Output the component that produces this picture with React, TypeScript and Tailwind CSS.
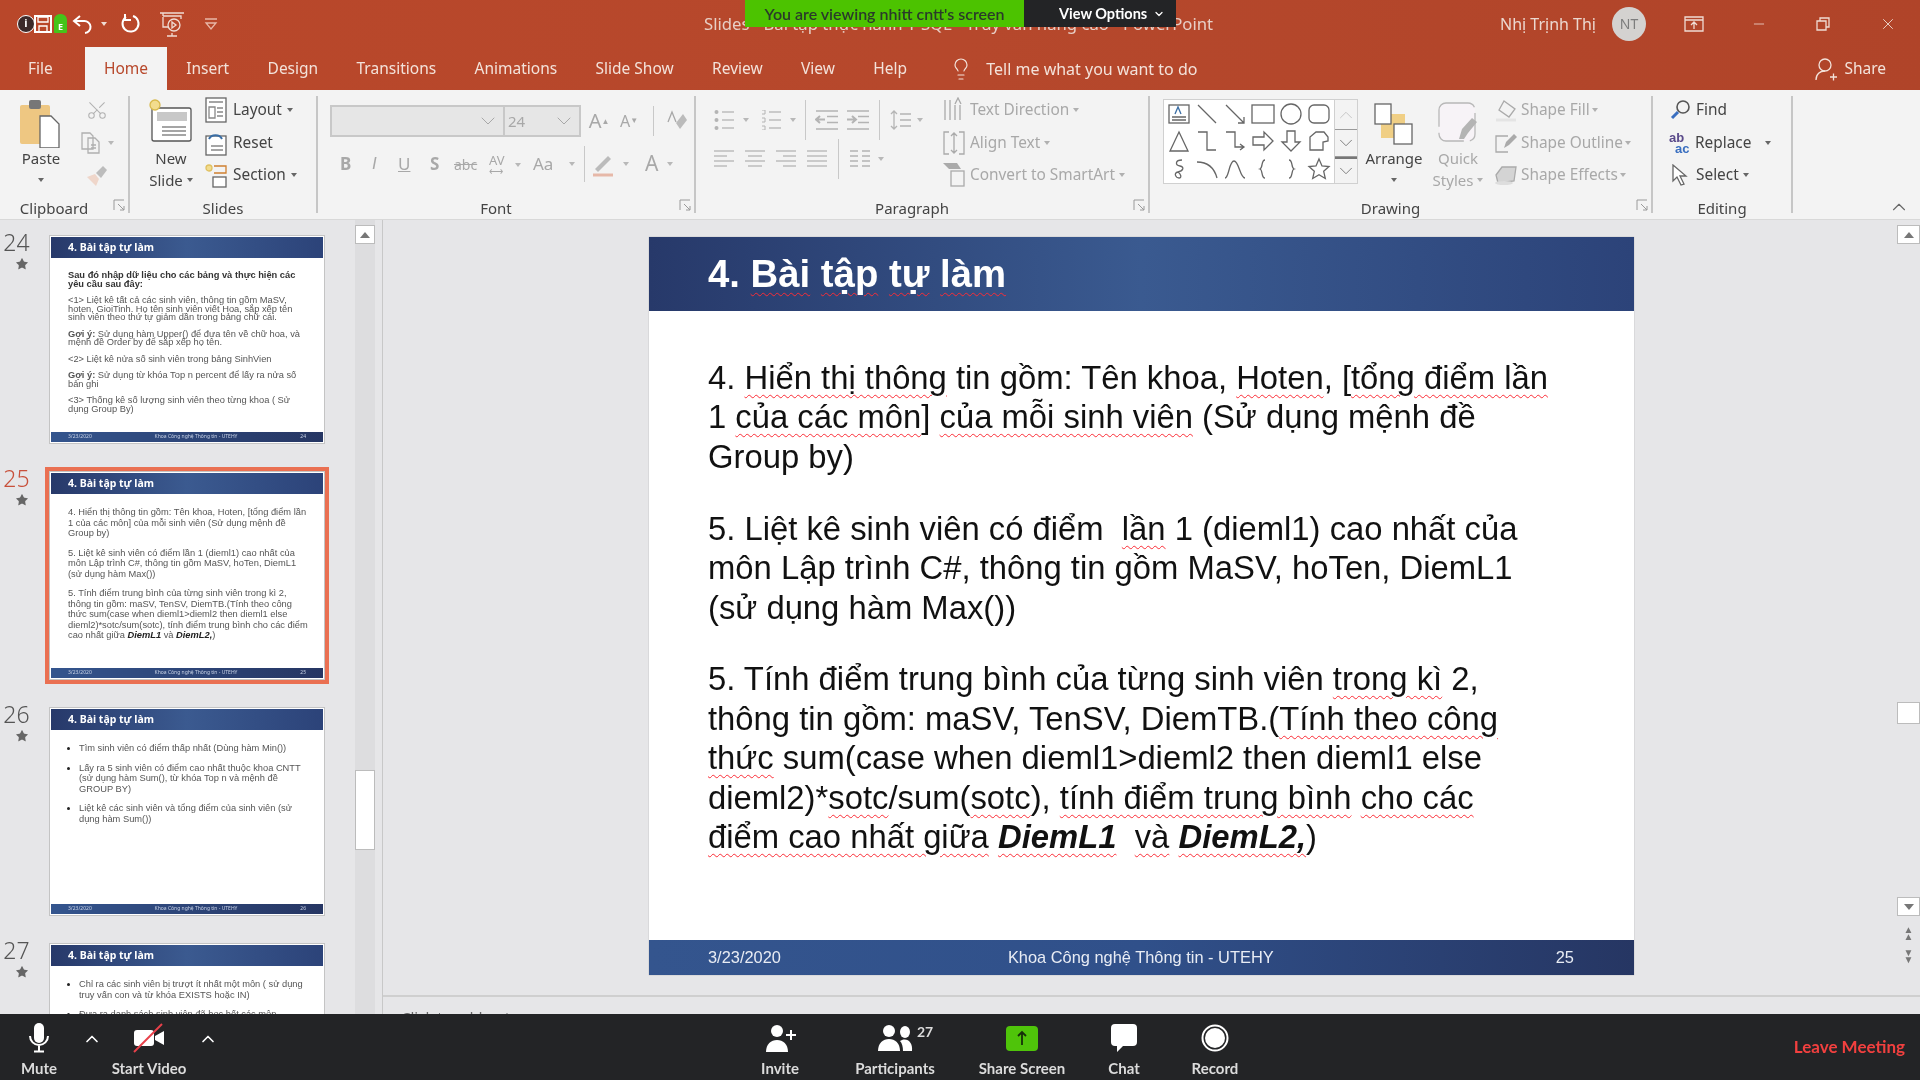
import type { ReactNode } from "react";
import { Scissors, ChevronUp, ChevronDown, Lightbulb, Minus, X, Star } from "lucide-react";

const sans = "font-['Noto_Sans',sans-serif]";
const arial = "font-['Liberation_Sans',Arial,sans-serif]";

const tabs = ["Insert", "Design", "Transitions", "Animations", "Slide Show", "Review", "View", "Help"];

function Ic({ w = 20, h = 20, className = "", children }: { w?: number; h?: number; className?: string; children: ReactNode }) {
  return (
    <svg width={w} height={h} viewBox={`0 0 ${w} ${h}`} fill="none" stroke="currentColor" strokeWidth="1.3" className={`shrink-0 ${className}`}>
      {children}
    </svg>
  );
}

function Caret({ className = "text-[#8a8a8a]" }: { className?: string }) {
  return <span className={`inline-block h-0 w-0 border-x-[3.5px] border-t-[4px] border-x-transparent border-t-current ${className}`} />;
}

function Wavy({ children }: { children: ReactNode }) {
  return <span className="underline decoration-red-500 decoration-wavy decoration-1 underline-offset-[5px]">{children}</span>;
}

function Launcher() {
  return (
    <Ic w={12} h={12} className="absolute right-[3px] top-[3px] text-[#9a9a9a]">
      <path d="M1 11V1h10M5 5l6 6M11 7v4H7" strokeWidth="1" />
    </Ic>
  );
}

function Group({ w, label, launcher, children }: { w: number; label: string; launcher?: boolean; children: ReactNode }) {
  return (
    <div style={{ width: w }} className="mt-[6px] flex h-[117px] shrink-0 flex-col border-r-2 border-[#c6c6c6]">
      <div className="flex h-[100px] shrink-0">{children}</div>
      <div className={`relative flex h-[24px] shrink-0 items-center justify-center text-[15px] text-[#444] ${launcher ? "pr-[20px]" : ""}`}>
        {label}
        {launcher && <Launcher />}
      </div>
    </div>
  );
}

function Row({ icon, label, off, caret = true, gap = "gap-[6px]" }: { icon: ReactNode; label: string; off?: boolean; caret?: boolean; gap?: string }) {
  return (
    <div className={`flex h-7 items-center whitespace-nowrap text-[15.400px] ${gap} ${off ? "text-[#a8a8a8]" : "text-[#444]"}`}>
      {icon}
      <span>{label}</span>
      {caret && <Caret className={off ? "ml-[-1px] text-[#b0b0b0]" : "ml-[-1px] text-[#666]"} />}
    </div>
  );
}

function Rows({ className = "", children }: { className?: string; children: ReactNode }) {
  return <div className={`flex flex-col gap-[4.5px] ${className}`}>{children}</div>;
}

function AlignIcon({ mode, className = "" }: { mode: "l" | "c" | "r" | "j"; className?: string }) {
  const spans: Record<string, [number, number][]> = {
    l: [[0, 20], [0, 13], [0, 20], [0, 13]],
    c: [[0, 20], [3, 17], [0, 20], [3, 17]],
    r: [[0, 20], [7, 20], [0, 20], [7, 20]],
    j: [[0, 20], [0, 20], [0, 20], [0, 20]],
  };
  return (
    <Ic w={20} h={17} className={`text-[#b4b4b4] ${className}`}>
      {spans[mode].map(([a, b], i) => (
        <path key={i} d={`M${a} ${i * 5 + 1}H${b}`} />
      ))}
    </Ic>
  );
}

function BulletIcon({ numbered, className = "" }: { numbered?: boolean; className?: string }) {
  return (
    <Ic w={20} h={20} className={`text-[#b4b4b4] ${className}`}>
      {[2, 10, 18].map((y) => (
        <g key={y}>
          {numbered ? <path d={`M1 ${y - 2}h3v4H1`} strokeWidth="1" /> : <circle cx="2.500" cy={y} r="2" fill="#b4b4b4" stroke="none" />}
          <path d={`M8 ${y}H20`} />
        </g>
      ))}
    </Ic>
  );
}

function IndentIcon({ flip, className = "" }: { flip?: boolean; className?: string }) {
  return (
    <Ic w={23} h={20} className={`text-[#b4b4b4] ${className}`}>
      <path d="M1 1h22M12 6.500h11M12 12.500h11M1 19h22" />
      {flip ? <path d="M1 9.500h8M6 6l4 3.500L6 13" strokeWidth="2" /> : <path d="M10 9.500H2M5 6L1 9.500 5 13" strokeWidth="2" />}
    </Ic>
  );
}

function Shape({ children }: { children: ReactNode }) {
  return (
    <div className="flex items-center justify-center text-[#666]">
      <Ic w={24} h={24}>{children}</Ic>
    </div>
  );
}

function Gallery() {
  return (
    <div className="mt-[3px] flex h-[85px] border border-[#d0d0d0] bg-white">
      <div className="grid w-[170px] grid-cols-6 grid-rows-3 px-[1px]">
        <Shape><rect x="2" y="3" width="20" height="18" /><path d="M5 15h14M5 18h14" /><path d="M8 12l3-7 3 7" stroke="#3a6ea5" /></Shape>
        <Shape><path d="M3 3l18 18" /></Shape>
        <Shape><path d="M3 3l18 18M21 15v6h-6" /></Shape>
        <Shape><rect x="1" y="3" width="22" height="18" /></Shape>
        <Shape><circle cx="12" cy="12" r="10" /></Shape>
        <Shape><rect x="2" y="3" width="20" height="18" rx="5" /></Shape>
        <Shape><path d="M12 3l9 19H3z" /></Shape>
        <Shape><path d="M3 3h9v18h9" /></Shape>
        <Shape><path d="M3 3h9v15h8M17 15l4 3-4 3" /></Shape>
        <Shape><path d="M2 8h11V3l9 9-9 9v-5H2z" /></Shape>
        <Shape><path d="M8 2h8v11h5l-9 9-9-9h5z" /></Shape>
        <Shape><path d="M3 21V8l6-5h8l4 5v4l-5 1v8z" /></Shape>
        <Shape><path d="M15 3C8 3 8 8 13 9s3 5-2 6-2 6 1 6 2-4-1-6" /></Shape>
        <Shape><path d="M2 5c10 0 17 5 20 16" /></Shape>
        <Shape><path d="M2 21C6 21 6 4 11 4s6 17 11 17" /></Shape>
        <Shape><path d="M14 3c-4 0-2 8-5 9 3 1 1 9 5 9" /></Shape>
        <Shape><path d="M10 3c4 0 2 8 5 9-3 1-1 9-5 9" /></Shape>
        <Shape><path d="M12 2l3 7 7 .6-5.300 4.700 1.600 7.200L12 17.700 5.700 21.500l1.600-7.200L2 9.600 9 9z" /></Shape>
      </div>
      <div className="flex w-[23px] flex-col border-l border-[#d0d0d0] bg-[#f3f3f3] text-[#777]">
        <div className="flex h-[29px] items-center justify-center text-[#c4c4c4]"><ChevronUp size={22} strokeWidth={1} /></div>
        <div className="flex h-[28px] items-center justify-center border-y border-[#9a9a9a]"><ChevronDown size={22} strokeWidth={1} /></div>
        <div className="flex flex-1 items-center justify-center border-t-2 border-[#777]"><ChevronDown size={22} strokeWidth={1} /></div>
      </div>
    </div>
  );
}

function Ribbon() {
  return (
    <div className={`flex h-[130px] shrink-0 border-b border-[#d8d8d8] bg-[#f3f3f3] ${sans}`}>
      <Group w={130} label="Clipboard" launcher>
        <div className="flex w-[82px] flex-col items-center text-[15px] text-[#444]">
          <Ic w={46} h={50} className="mt-[2px]">
            <rect x="2" y="7" width="30" height="39" rx="2" fill="#eec782" stroke="none" />
            <rect x="11" y="2" width="12" height="9" rx="2" fill="#777" stroke="none" />
            <path d="M22 18h11l8 8v24H22z" fill="#fff" stroke="#666" />
          </Ic>
          <span className="leading-5">Paste</span>
          <Caret className="mt-[10px] text-[#666]" />
        </div>
        <Rows className="w-[30px] items-center text-[#b0b0b0]">
          <div className="flex h-7 items-center"><Scissors size={22} strokeWidth={1.1} className="-rotate-90" /></div>
          <div className="flex h-7 items-center gap-[6px]">
            <Ic w={22} h={24}><path d="M2 2h8l3 3v13H2zM8 7h7l4 4v11H8z" fill="#f3f3f3" /><path d="M11 14h5M11 17h5" /></Ic>
            <Caret className="text-[#b8b8b8]" />
          </div>
          <div className="flex h-7 items-center">
            <Ic w={24} h={24}><path d="M2 14l8-3 4 5-3 7z" fill="#efd6ca" stroke="none" /><path d="M11 10l7-7 4 4-6 8z" fill="#bcbcbc" stroke="none" /></Ic>
          </div>
        </Rows>
      </Group>

      <Group w={188} label="Slides">
        <div className="flex w-[70px] flex-col items-center pl-[12px] text-[15px] leading-[22px] text-[#444]">
          <Ic w={44} h={46} className="mt-[2px]">
            <rect x="3" y="10" width="39" height="33" rx="2" fill="#fff" stroke="#555" />
            <rect x="8" y="14" width="30" height="9" fill="#c8c8c8" stroke="none" />
            <path d="M13 29h24M13 33h24M13 37h24" stroke="#888" />
            <circle cx="6" cy="7" r="5" fill="#f2dc8d" stroke="#d8b94c" />
          </Ic>
          <span className="mt-[3px]">New</span>
          <span className="flex items-center gap-1">Slide <Caret className="text-[#666]" /></span>
        </div>
        <Rows className="ml-[5px]">
          <Row gap="gap-[6px]" label="Layout" icon={
            <Ic w={22} h={26}><rect x="1" y="1" width="20" height="24" fill="#fff" stroke="#666" /><path d="M4 5h14M4 10h6v11H4zM12 11h6M12 15h6M12 19h6" stroke="#888" /></Ic>
          } />
          <Row gap="gap-[6px]" caret={false} label="Reset" icon={
            <Ic w={22} h={26}><rect x="1" y="6" width="20" height="19" fill="#fff" stroke="#666" /><path d="M4 9a7 6 0 0 1 13 0" stroke="#3a6ea5" strokeWidth="2" /><path d="M6 16h12M6 20h12" stroke="#888" /></Ic>
          } />
          <Row gap="gap-[6px]" label="Section" icon={
            <Ic w={22} h={26}><circle cx="4" cy="6" r="3" fill="#f2dc8d" stroke="#e0c060" /><path d="M9 4h12v7H9" stroke="#d08030" /><rect x="8" y="15" width="13" height="10" fill="#fff" stroke="#666" /></Ic>
          } />
        </Rows>
      </Group>

      <Group w={378} label="Font" launcher>
        <div className="flex w-full flex-col pl-[12px] text-[#a8a8a8]">
          <div className="flex items-center">
            <div className="mt-[9px] flex h-[32px] w-[175px] items-center justify-end border-2 border-[#c8c8c8] bg-[#e6e6e6] pr-[3px]"><ChevronDown size={24} strokeWidth={1} /></div>
            <div className="mt-[9px] flex h-[32px] w-[76px] items-center justify-between border-y-2 border-r-2 border-[#c8c8c8] bg-[#e6e6e6] px-[3px] text-[15px]">24<ChevronDown size={24} strokeWidth={1} /></div>
            <div className="mt-[9px] flex items-center">
              <span className="ml-[4px] w-[28px] text-center text-[20px]">A<sup className="text-[8px]">▲</sup></span>
              <span className="ml-[2px] w-[28px] text-center text-[16px]">A<sup className="text-[8px]">▼</sup></span>
              <span className="ml-[10px] h-[30px] border-l border-[#c8c8c8]" />
              <Ic w={22} h={24} className="ml-[12px]"><path d="M10 14l7-9 4 6-7 9z" fill="#bbb" stroke="none" /><path d="M2 13L6 3l4 10" /></Ic>
            </div>
          </div>
          <div className="mt-[11px] flex h-[32px] items-center text-[17px]">
            <b className="w-[30px] pl-[10px] font-bold">B</b>
            <i className={`w-[29px] pl-[12px] ${arial}`}>I</i>
            <span className="w-[35px] pl-[9px] underline">U</span>
            <b className="w-[30px] pl-[6px] font-bold">S</b>
            <span className="w-[34px] text-[14px] line-through">abc</span>
            <span className="flex w-[43px] flex-col pl-[1px] text-[13px] leading-[14px]">AV<span className="text-[10px] leading-[8px]">⟷</span></span>
            <span className="w-[14px]"><Caret className="mb-[3px] ml-[-16px] text-[#b8b8b8]" /></span>
            <span className="ml-[-12px] w-[36px] text-[17px]">Aa</span>
            <Caret className="text-[#b8b8b8]" />
            <span className="ml-[9px] h-[36px] border-l border-[#c8c8c8]" />
            <Ic w={26} h={28} className="ml-[5px]"><path d="M5 19L18 6l3 3L8 22z" fill="#bbb" stroke="none" /><path d="M3 25h20" stroke="#e6b8a8" strokeWidth="3" /></Ic>
            <Caret className="ml-[7px] text-[#b8b8b8]" />
            <span className="ml-[16px] text-[21px]">A</span>
            <Caret className="ml-[9px] text-[#b8b8b8]" />
          </div>
        </div>
      </Group>

      <Group w={454} label="Paragraph" launcher>
        <div className="flex w-[247px] flex-col pl-[18px] text-[#b4b4b4]">
          <div className="mt-[14px] flex h-[20px] items-center">
            <BulletIcon />
            <Caret className="ml-[9px] text-[#b8b8b8]" />
            <BulletIcon numbered className="ml-[12px]" />
            <Caret className="ml-[9px] text-[#b8b8b8]" />
            <span className="ml-[9px] h-[40px] border-l border-[#c8c8c8]" />
            <IndentIcon className="ml-[9px]" />
            <IndentIcon flip className="ml-[8px]" />
            <span className="ml-[10px] h-[40px] border-l border-[#c8c8c8]" />
            <Ic w={21} h={24} className="ml-[10px]"><path d="M4 3v18M1 6l3-3 3 3M1 18l3 3 3-3M10 6h11M10 12h11M10 18h11" /></Ic>
            <Caret className="ml-[6px] text-[#b8b8b8]" />
          </div>
          <div className="mt-[20px] flex h-[17px] items-center">
            <AlignIcon mode="l" />
            <AlignIcon mode="c" className="ml-[11px]" />
            <AlignIcon mode="r" className="ml-[11px]" />
            <AlignIcon mode="j" className="ml-[11px]" />
            <span className="ml-[11px] h-[40px] border-l border-[#c8c8c8]" />
            <Ic w={20} h={17} className="ml-[11px]"><path d="M0 1h8M0 6h8M0 11h8M0 16h8M12 1h8M12 6h8M12 11h8M12 16h8" /></Ic>
            <Caret className="ml-[8px] text-[#b8b8b8]" />
          </div>
        </div>
        <Rows>
          <Row off gap="gap-[5px]" label="Text Direction" icon={<Ic w={22} h={26} className="text-[#aaa]"><path d="M2 3v20M7 3v20M12 8v15M17 8v15" /><path d="M12 7l3-6 3 6" /></Ic>} />
          <Row off gap="gap-[5px]" label="Align Text" icon={<Ic w={22} h={26} className="text-[#aaa]"><path d="M6 2H1v22h5M16 2h5v22h-5M11 3v20M8 6l3-3 3 3M8 20l3 3 3-3" /></Ic>} />
          <Row off gap="gap-[5px]" label="Convert to SmartArt" icon={<Ic w={22} h={26} className="text-[#aaa]"><path d="M0 1h14l4 6H6z" fill="#aaa" stroke="none" /><rect x="8" y="9" width="13" height="15" fill="#f3f3f3" /></Ic>} />
        </Rows>
      </Group>

      <Group w={503} label="Drawing" launcher>
        <div className="ml-[13px]"><Gallery /></div>
        <div className="flex w-[72px] flex-col items-center text-[15px] text-[#444]">
          <Ic w={40} h={46} className="mt-[6px]">
            <rect x="7" y="12" width="24" height="24" fill="#f0cf85" stroke="none" />
            <rect x="1" y="2" width="16" height="20" fill="#fff" stroke="#666" />
            <rect x="20" y="22" width="18" height="20" fill="#fff" stroke="#666" />
          </Ic>
          <span className="leading-5">Arrange</span>
          <Caret className="mt-[10px] text-[#666]" />
        </div>
        <div className="flex w-[56px] flex-col items-center text-[15px] leading-[22px] text-[#a8a8a8]">
          <Ic w={42} h={46} className="mt-[5px]">
            <rect x="2" y="2" width="36" height="38" rx="7" fill="#f7f3f7" stroke="#b8b8b8" strokeDasharray="30 6" />
            <path d="M22 38l3-10 10-11 5 4-9 11-4 6z" fill="#b4b4b4" stroke="none" />
          </Ic>
          <span>Quick</span>
          <span className="flex items-center gap-1 whitespace-nowrap">Styles <Caret className="text-[#b0b0b0]" /></span>
        </div>
        <Rows className="ml-[8px]">
          <Row off gap="gap-[3px]" label="Shape Fill" icon={<Ic w={24} h={24} className="text-[#aaa]"><path d="M10 3l11 8-6 8-10-7z" /><path d="M2 22h20" stroke="#e4e4e4" strokeWidth="3" /></Ic>} />
          <Row off gap="gap-[3px]" label="Shape Outline" icon={<Ic w={24} h={24} className="text-[#aaa]"><path d="M14 5H2v16h12" /><path d="M10 17l2-6 8-8 3 3-8 8z" fill="#aaa" stroke="none" /></Ic>} />
          <Row off gap="gap-[3px]" label="Shape Effects" icon={<Ic w={24} h={24} className="text-[#aaa]"><path d="M2 12L8 4h14l-2 14-16 2z" fill="#d4d4d4" /><ellipse cx="10" cy="20" rx="9" ry="2" fill="#ddd" stroke="none" /></Ic>} />
        </Rows>
      </Group>

      <Group w={140} label="Editing">
        <Rows className="ml-[16px]">
          <Row caret={false} gap="gap-[5px]" label="Find" icon={
            <Ic w={22} h={22}><circle cx="14" cy="8" r="6" stroke="#555" strokeWidth="1.6" /><path d="M9 13l-6 6" stroke="#3a6fc0" strokeWidth="3" /></Ic>
          } />
          <div className="flex h-7 items-center gap-[3px] text-[15.400px] text-[#444]">
            <span className={`flex w-[23px] flex-col text-[13px] font-semibold leading-[11px] text-[#5a4a8a] ${arial}`}>ab<span className="pl-[6px] text-[#3a6fc0]">ac</span></span>
            Replace
            <Caret className="ml-[11px] text-[#666]" />
          </div>
          <Row gap="gap-[5px]" label="Select" icon={
            <Ic w={20} h={22} className="ml-[2px]"><path d="M2 1v16l4-4 4 8 3-1-4-8h6z" fill="#fff" stroke="#666" /></Ic>
          } />
        </Rows>
      </Group>

      <div className="ml-auto mr-[10px] flex items-end pb-[1px] text-[#666]"><ChevronUp size={22} strokeWidth={1.2} /></div>
    </div>
  );
}

function TitleBar() {
  return (
    <div className={`flex h-[47px] shrink-0 items-center text-[#f0dcd4] ${sans}`}>
      <div className="ml-[17px] flex h-[18px] w-[18px] items-center justify-center rounded-full border border-white bg-[#3c2a2a] text-[11px] font-bold text-white">i</div>
      <Ic w={20} h={20} className="-ml-[2px] text-white"><path d="M2 2h16v16H2z" strokeWidth="2" /><path d="M5 3h10v5H5zM6 18v-6h8v6" /></Ic>
      <div className="ml-[1px] flex h-[19px] w-[13px] items-end justify-center rounded-t-md rounded-b-[1px] bg-[#45c41a] text-[9px] font-bold leading-[13px] text-white">E</div>
      <Ic w={24} h={22} className="ml-[4px] text-white"><path d="M9 3L3 8l6 5M3 8h10a6 6 0 0 1 1 12" strokeWidth="2" /></Ic>
      <Caret className="ml-[6px] text-[#f0dcd4]" />
      <Ic w={22} h={22} className="ml-[13px] text-white"><path d="M13 3a8 8 0 1 1-7 1M5 1v6h6" strokeWidth="2" /></Ic>
      <Ic w={26} h={26} className="ml-[17px] text-[#f0dcd4]"><path d="M1 2h24M4 2v3M13 22v3M8 25h10" /><path d="M4 5h18v3" /><circle cx="15" cy="14" r="6" /><path d="M13 11l4 3-4 3zM4 6v10h5" /></Ic>
      <Ic w={14} h={14} className="ml-[19px] text-[#e8b8a8]"><path d="M1 2h12M2 6h10l-5 6z" /></Ic>
      <span className="ml-[486px] w-[520px] shrink-0 whitespace-nowrap text-[16.700px] text-[#e8cfc6]">Slides - Bài tập thực hành T-SQL - Truy vấn nâng cao - PowerPoint</span>
      <div className="ml-auto flex items-center">
        <span className="text-[16px] text-[#ecd8d0]">Nhị Trịnh Thị</span>
        <div className="ml-[16px] flex h-[34px] w-[34px] items-center justify-center rounded-full bg-[#d4d2d0] text-[14px] text-[#7d7d7d]">NT</div>
        <Ic w={20} h={16} className="ml-[38px] text-[#f0dcd4]"><path d="M1 1h18v14H1zM1 4h18M10 13V7M7 9l3-3 3 3" /></Ic>
        <Minus size={16} strokeWidth={1.2} className="ml-[47px] text-[#f0dcd4]" />
        <Ic w={14} h={14} className="ml-[49px] text-[#f0dcd4]"><path d="M1 4h9v9H1zM4 4V1h9v9h-3" /></Ic>
        <X size={18} strokeWidth={1.2} className="ml-[49px] mr-[23px] text-[#f0dcd4]" />
      </div>
    </div>
  );
}

function TabRow() {
  return (
    <div className={`flex h-[43px] shrink-0 items-stretch text-[15.500px] text-[#f3e2da] ${sans}`}>
      <div className="flex w-[85px] items-center pl-[28px]">File</div>
      <div className="flex w-[82px] items-center justify-center bg-[#f3f3f3] text-[#b7472a]">Home</div>
      {tabs.map((t) => (
        <div key={t} className="flex items-center whitespace-nowrap px-[19.200px]">{t}</div>
      ))}
      <div className="ml-[23px] flex items-center gap-[13px] whitespace-nowrap text-[16px]">
        <Lightbulb size={24} strokeWidth={1.2} />
        Tell me what you want to do
      </div>
      <div className="ml-auto mr-[34px] flex items-center gap-[7px]">
        <Ic w={22} h={24}><circle cx="10" cy="8" r="6" /><path d="M1 23c0-6 4-9 9-9M15 20h7M18.500 16.500v7" /></Ic>
        Share
      </div>
    </div>
  );
}

function Thumb({ num, selected, bodyClass = "leading-[10.500px]", children }: { num: number; selected?: boolean; bodyClass?: string; children: ReactNode }) {
  return (
    <div className="flex h-[209px] shrink-0 items-start">
      <div className="-mt-[7px] flex w-[45px] shrink-0 flex-col items-center pr-[12px]">
        <span className={`text-[23px] font-light leading-[28px] ${selected ? "text-[#c8503a]" : "text-[#555]"} ${sans}`}>{num}</span>
        <Star size={14} fill="#666" strokeWidth={0} className="mt-[1px] ml-[10px]" />
      </div>
      <div className={selected ? "-my-[4px] border-[4px] border-[#ea7052]" : "ml-[4px]"}>
        <div className="flex h-[209px] w-[276px] flex-col border border-[#c4c4c4] bg-white p-[1px]">
          <div className="flex h-[21px] shrink-0 items-center bg-gradient-to-r from-[#27396a] via-[#3b5a90] to-[#2c4379] pl-[17px] text-[10.500px] font-bold text-white blur-[0.2px]">4. Bài tập tự làm</div>
          <div className={`flex-1 overflow-hidden pl-[17px] pr-[14px] pt-[13px] text-[9.300px] text-[#555] blur-[0.25px] ${bodyClass} ${arial}`}>{children}</div>
          <div className="flex h-[10px] shrink-0 items-center justify-between bg-gradient-to-r from-[#34558e] to-[#263663] px-[17px] text-[5px] text-[#c8d2e6]">
            <span>3/23/2020</span>
            <span>Khoa Công nghệ Thông tin - UTEHY</span>
            <span>{num}</span>
          </div>
        </div>
      </div>
    </div>
  );
}

function ThumbPane() {
  return (
    <div className="flex w-[355px] shrink-0 flex-col gap-[27px] overflow-hidden pt-[15px]">
      <Thumb num={24} bodyClass="leading-[8.500px]">
        <p className="font-bold text-[#333]">Sau đó nhập dữ liệu cho các bảng và thực hiện các yêu cầu sau đây:</p>
        <p className="mt-[8px]">&lt;1&gt; Liệt kê tất cả các sinh viên, thông tin gồm MaSV, hoten, GioiTinh. Họ tên sinh viên viết Hoa, sắp xếp tên sinh viên theo thứ tự giảm dần trong bảng chữ cái.</p>
        <p className="mt-[8px]"><b>Gợi ý:</b> Sử dụng hàm Upper() để đưa tên về chữ hoa, và mệnh đề Order by để sắp xếp họ tên.</p>
        <p className="mt-[8px]">&lt;2&gt; Liệt kê nửa số sinh viên trong bảng SinhVien</p>
        <p className="mt-[8px]"><b>Gợi ý:</b> Sử dụng từ khóa Top n percent để lấy ra nửa số bản ghi</p>
        <p className="mt-[8px]">&lt;3&gt; Thống kê số lượng sinh viên theo từng khoa ( Sử dụng Group By)</p>
      </Thumb>
      <Thumb num={25} selected>
        <p>4. Hiển thị thông tin gồm: Tên khoa, Hoten, [tổng điểm lần 1 của các môn] của mỗi sinh viên (Sử dụng mệnh đề Group by)</p>
        <p className="mt-[9px]">5. Liệt kê sinh viên có điểm lần 1 (dieml1) cao nhất của môn Lập trình C#, thông tin gồm MaSV, hoTen, DiemL1 (sử dụng hàm Max())</p>
        <p className="mt-[9px]">5. Tính điểm trung bình của từng sinh viên trong kì 2, thông tin gồm: maSV, TenSV, DiemTB.(Tính theo công thức sum(case when dieml1&gt;dieml2 then dieml1 else dieml2)*sotc/sum(sotc), tính điểm trung bình cho các điểm cao nhất giữa <b className="italic text-[#222]">DiemL1</b> và <b className="italic text-[#222]">DiemL2,</b>)</p>
      </Thumb>
      <Thumb num={26}>
        <ul className="list-disc pl-[11px] marker:text-[#222]">
          <li>Tìm sinh viên có điểm thấp nhất (Dùng hàm Min())</li>
          <li className="mt-[9px]">Lấy ra 5 sinh viên có điểm cao nhất thuộc khoa CNTT (sử dụng hàm Sum(), từ khóa Top n và mệnh đề GROUP BY)</li>
          <li className="mt-[9px]">Liệt kê các sinh viên và tổng điểm của sinh viên (sử dụng hàm Sum())</li>
        </ul>
      </Thumb>
      <Thumb num={27}>
        <ul className="list-disc pl-[11px] marker:text-[#222]">
          <li>Chỉ ra các sinh viên bị trượt ít nhất một môn ( sử dụng truy vấn con và từ khóa EXISTS hoặc IN)</li>
          <li className="mt-[9px]">Đưa ra danh sách sinh viên đã học hết các môn</li>
        </ul>
      </Thumb>
    </div>
  );
}

function ScrollBtn({ up }: { up?: boolean }) {
  return (
    <div className="flex h-[19px] shrink-0 items-center justify-center border border-[#bcbcbc] bg-white">
      <span className={`h-0 w-0 border-x-[5px] border-x-transparent ${up ? "border-b-[6px] border-b-[#777]" : "border-t-[6px] border-t-[#777]"}`} />
    </div>
  );
}

function MainSlide() {
  return (
    <div className={`ml-[266px] mt-[17px] flex h-[738px] w-[985px] shrink-0 flex-col bg-white shadow-[0_0_1px_#999] ${arial}`}>
      <div className="flex h-[74px] shrink-0 items-center bg-gradient-to-r from-[#27396a] via-[#3a5a90] to-[#2c4379] pl-[59px] text-[38.300px] font-bold text-white">
        <span>4. <Wavy>Bài</Wavy> <Wavy>tập</Wavy> <Wavy>tự</Wavy> <Wavy>làm</Wavy></span>
      </div>
      <div className="flex-1 pl-[59px] pt-[47px] text-[32.800px] leading-[39.400px] text-[#111]">
        <p className="whitespace-nowrap">4. <Wavy>Hiển thị thông</Wavy> tin gồm: Tên khoa, <Wavy>Hoten</Wavy>, [<Wavy>tổng điểm lần</Wavy></p>
        <p className="whitespace-nowrap">1 <Wavy>của các môn</Wavy>] <Wavy>của mỗi sinh viên</Wavy> (Sử dụng mệnh đề</p>
        <p className="whitespace-nowrap">Group by)</p>
        <p className="mt-[32.500px] whitespace-nowrap">5. Liệt kê sinh viên có điểm &nbsp;<Wavy>lần</Wavy> 1 (dieml1) cao nhất của</p>
        <p className="whitespace-nowrap">môn Lập trình C#, thông tin gồm MaSV, hoTen, DiemL1</p>
        <p className="whitespace-nowrap">(sử dụng hàm Max())</p>
        <p className="mt-[32.500px] whitespace-nowrap">5. Tính điểm trung bình của từng sinh viên <Wavy>trong kì</Wavy> 2,</p>
        <p className="whitespace-nowrap">thông tin gồm: maSV, TenSV, DiemTB.(<Wavy>Tính theo công</Wavy></p>
        <p className="whitespace-nowrap"><Wavy>thức</Wavy> sum(case when dieml1&gt;dieml2 then dieml1 else</p>
        <p className="whitespace-nowrap">dieml2)*<Wavy>sotc</Wavy>/sum(<Wavy>sotc</Wavy>), <Wavy>tính điểm trung bình</Wavy> <Wavy>cho các</Wavy></p>
        <p className="whitespace-nowrap"><Wavy>điểm cao nhất giữa</Wavy> <b className="italic"><Wavy>DiemL1</Wavy></b> &nbsp;<Wavy>và</Wavy> <b className="italic"><Wavy>DiemL2,</Wavy></b>)</p>
      </div>
      <div className="relative flex h-[35px] shrink-0 items-center bg-gradient-to-r from-[#34558e] via-[#30508a] to-[#263663] pl-[59px] text-[16.400px] text-[#e8ecf4]">
        <span>3/23/2020</span>
        <span className="ml-[227px]">Khoa Công nghệ Thông tin - UTEHY</span>
        <span className="ml-[282px]">25</span>
      </div>
    </div>
  );
}

function ZoomItem({ w, label, ml, children }: { w: number; label: string; ml?: string; children: ReactNode }) {
  return (
    <div style={{ width: w }} className={`relative flex shrink-0 flex-col items-center ${ml ?? ""}`}>
      <div className="flex h-[40px] items-center justify-center pt-[2px]">{children}</div>
      <span className="mt-[3px] whitespace-nowrap text-[15px] font-bold leading-4 text-[#dcdcdc]">{label}</span>
    </div>
  );
}

function ZoomBar() {
  return (
    <div className="flex h-[66px] shrink-0 items-start bg-[#232426] pt-[3px] font-['Lato',sans-serif] text-white">
      <ZoomItem w={78} label="Mute">
        <Ic w={20} h={30}><rect x="5" y="0" width="10" height="20" rx="5" fill="#fff" stroke="none" /><path d="M1 13a9 9 0 0 0 18 0M10 22v6M5 28.500h10" strokeWidth="2" stroke="#fff" /></Ic>
      </ZoomItem>
      <div className="flex h-[44px] w-[28px] items-center justify-center"><ChevronUp size={20} strokeWidth={2} /></div>
      <ZoomItem w={86} label="Start Video">
        <Ic w={32} h={30}><rect x="1" y="7" width="20" height="16" rx="3" fill="#fff" stroke="none" /><path d="M22 13l9-5v14l-9-5z" fill="#fff" stroke="none" /><path d="M1 29L29 1" stroke="#e8414a" strokeWidth="2" /></Ic>
      </ZoomItem>
      <div className="flex h-[44px] w-[32px] items-center justify-center"><ChevronUp size={20} strokeWidth={2} /></div>
      <ZoomItem w={80} label="Invite" ml="ml-[516px]">
        <Ic w={32} h={28}><circle cx="13" cy="7" r="6" fill="#fff" stroke="none" /><path d="M2 28c0-8 5-12 11-12s11 4 11 12z" fill="#fff" stroke="none" /><path d="M27 6v10M22 11h10" stroke="#fff" strokeWidth="2" /></Ic>
      </ZoomItem>
      <ZoomItem w={110} label="Participants" ml="ml-[20px]">
        <Ic w={36} h={26}><circle cx="12" cy="6" r="6" fill="#fff" stroke="none" /><path d="M1 26c0-8 5-12 11-12s11 4 11 12z" fill="#fff" stroke="none" /><ellipse cx="28" cy="7" rx="5" ry="6" fill="#fff" stroke="none" /><path d="M25 15c6-2 11 3 10 11h-9c0-4-1-8-3-10z" fill="#fff" stroke="none" /></Ic>
        <span className="absolute left-[77px] top-[4px] text-[14px] font-bold text-[#dcdcdc]">27</span>
      </ZoomItem>
      <ZoomItem w={100} label="Share Screen" ml="ml-[22px]">
        <div className="flex h-[25px] w-[32px] items-center justify-center rounded-[4px] bg-[#4fc40a] text-[#16300a]">
          <Ic w={12} h={16}><path d="M6 15V2M2 6l4-4 4 4" strokeWidth="1.800" /></Ic>
        </div>
      </ZoomItem>
      <ZoomItem w={60} label="Chat" ml="ml-[22px]">
        <Ic w={28} h={28}><path d="M5 0h18a4 4 0 0 1 4 4v14a4 4 0 0 1-4 4H13l-6 6v-6H5a4 4 0 0 1-4-4V4a4 4 0 0 1 4-4z" fill="#fff" stroke="none" /></Ic>
      </ZoomItem>
      <ZoomItem w={70} label="Record" ml="ml-[26px]">
        <Ic w={28} h={28}><circle cx="14" cy="14" r="12.500" stroke="#fff" strokeWidth="2" /><circle cx="14" cy="14" r="10" fill="#fff" stroke="none" /></Ic>
      </ZoomItem>
      <span className="ml-auto mr-[15px] mt-[17px] text-[17px] font-bold text-[#f2403f]">Leave Meeting</span>
    </div>
  );
}

export default function App() {
  return (
    <div className="relative flex h-screen w-full flex-col overflow-hidden bg-[#e6e6e8] blur-[0.3px]">
      <div className="shrink-0 bg-gradient-to-r from-[#b9472a] via-[#b6482c] to-[#b04429]">
        <TitleBar />
        <TabRow />
      </div>
      <Ribbon />

      <div className="flex min-h-0 flex-1">
        <ThumbPane />
        <div className="flex w-[20px] shrink-0 flex-col bg-[#dddddf] pt-[5px]">
          <ScrollBtn up />
          <div className="mt-[526px] h-[80px] shrink-0 border border-[#bcbcbc] bg-white" />
        </div>
        <div className="ml-[7px] flex min-w-0 flex-1 flex-col border-l border-[#c8c8c8]">
          <div className="flex h-[777px] shrink-0 border-b-2 border-[#cfcfcf]">
            <div className="min-w-0 flex-1">
              <MainSlide />
            </div>
            <div className="flex w-[23px] shrink-0 flex-col pt-[5px]">
              <ScrollBtn up />
              <div className="mt-[458px] h-[22px] shrink-0 border border-[#bcbcbc] bg-white" />
              <div className="mt-[173px]"><ScrollBtn /></div>
              <div className="mt-[7px] flex flex-col items-center text-[10px] leading-[12px] text-[#777]">
                <span>▲</span>
                <span className="-mt-[5px]">▲</span>
                <span className="mt-[4px]">▼</span>
                <span className="-mt-[5px]">▼</span>
              </div>
            </div>
          </div>
          <div className={`overflow-hidden pl-[18px] pt-[9px] text-[15px] text-[#666] ${sans}`}>Click to add notes</div>
        </div>
      </div>

      <ZoomBar />

      <div className="absolute left-[745px] top-0 flex h-[27px] font-['Lato',sans-serif]">
        <div className="flex w-[279px] items-center justify-center bg-[#4cc300] text-[16px] font-semibold text-[#2a3a2a]">You are viewing nhitt cntt's screen</div>
        <div className="flex w-[152px] items-center gap-[6px] bg-[#232426] pl-[35px] text-[14.500px] font-bold text-white">
          View Options
          <ChevronDown size={12} strokeWidth={2.500} />
        </div>
      </div>
    </div>
  );
}
